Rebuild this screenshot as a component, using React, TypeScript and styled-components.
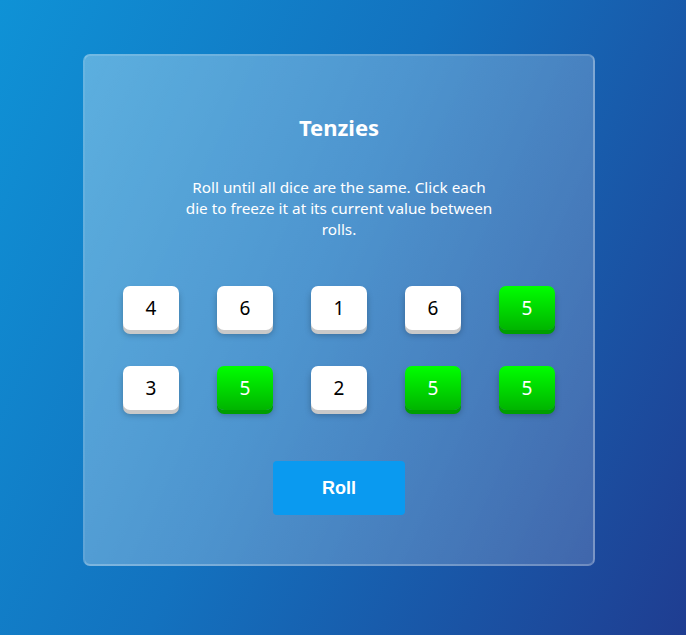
import styled, { createGlobalStyle } from "styled-components";

const GlobalStyle = createGlobalStyle`
  html, body {
    margin: 0;
    padding: 0;
  }
  body {
    font-family: "Noto Sans", "Open Sans", sans-serif;
    background: linear-gradient(115deg, #0f92d6 0%, #1372bf 45%, #1f3d91 100%);
    min-height: 100vh;
  }
`;

const Page = styled.main`
  width: 686px;
  height: 635px;
  display: flex;
  justify-content: center;
  padding: 54px 8px 0 0;
  box-sizing: border-box;
`;

const Card = styled.section`
  width: 512px;
  height: 512px;
  box-sizing: border-box;
  border: 2px solid rgba(255, 255, 255, 0.2);
  border-radius: 7px;
  background: linear-gradient(115deg, rgba(255, 255, 255, 0.32), rgba(255, 255, 255, 0.16));
  display: flex;
  flex-direction: column;
  align-items: center;
  padding-top: 56px;
  color: #fff;
`;

const Title = styled.h1`
  margin: 0;
  font-size: 22px;
  font-weight: 700;
  line-height: 30px;
`;

const Instructions = styled.p`
  margin: 35px 0 0;
  width: 312px;
  font-size: 15.3px;
  line-height: 21px;
  text-align: center;
`;

const DiceGrid = styled.div`
  margin-top: 46px;
  display: grid;
  grid-template-columns: repeat(5, 56px);
  column-gap: 38px;
  row-gap: 32px;
`;

interface IDie {
  held: boolean;
}

const Die = styled.button<IDie>`
  width: 56px;
  height: 44px;
  margin-bottom: 4px;
  border: none;
  border-radius: 7px;
  font-family: "Noto Sans", "Open Sans", sans-serif;
  font-size: 19px;
  color: ${(props) => (props.held ? "#fff" : "#000")};
  background: ${(props) =>
    props.held ? "linear-gradient(180deg, #00ff00 0%, #00b400 100%)" : "#fff"};
  box-shadow: 0 4px 0 ${(props) => (props.held ? "#009e00" : "#c9c9c9")},
    0 5px 6px rgba(0, 0, 0, 0.25);
  cursor: pointer;
  padding: 0;
`;

const RollButton = styled.button`
  margin-top: 47px;
  width: 132px;
  height: 54px;
  border: none;
  border-radius: 4px;
  background: #0a9af0;
  color: #fff;
  font-family: "Liberation Sans", Arial, sans-serif;
  font-size: 18px;
  font-weight: 700;
  cursor: pointer;
`;

const dice = [
  { value: 4, held: false },
  { value: 6, held: false },
  { value: 1, held: false },
  { value: 6, held: false },
  { value: 5, held: true },
  { value: 3, held: false },
  { value: 5, held: true },
  { value: 2, held: false },
  { value: 5, held: true },
  { value: 5, held: true },
];

const App = () => {
  return (
    <>
      <GlobalStyle />
      <Page>
        <Card>
          <Title>Tenzies</Title>
          <Instructions>
            Roll until all dice are the same. Click each die to freeze it at its
            current value between rolls.
          </Instructions>
          <DiceGrid>
            {dice.map((die, i) => (
              <Die key={i} held={die.held}>
                {die.value}
              </Die>
            ))}
          </DiceGrid>
          <RollButton>Roll</RollButton>
        </Card>
      </Page>
    </>
  );
};

export default App;
